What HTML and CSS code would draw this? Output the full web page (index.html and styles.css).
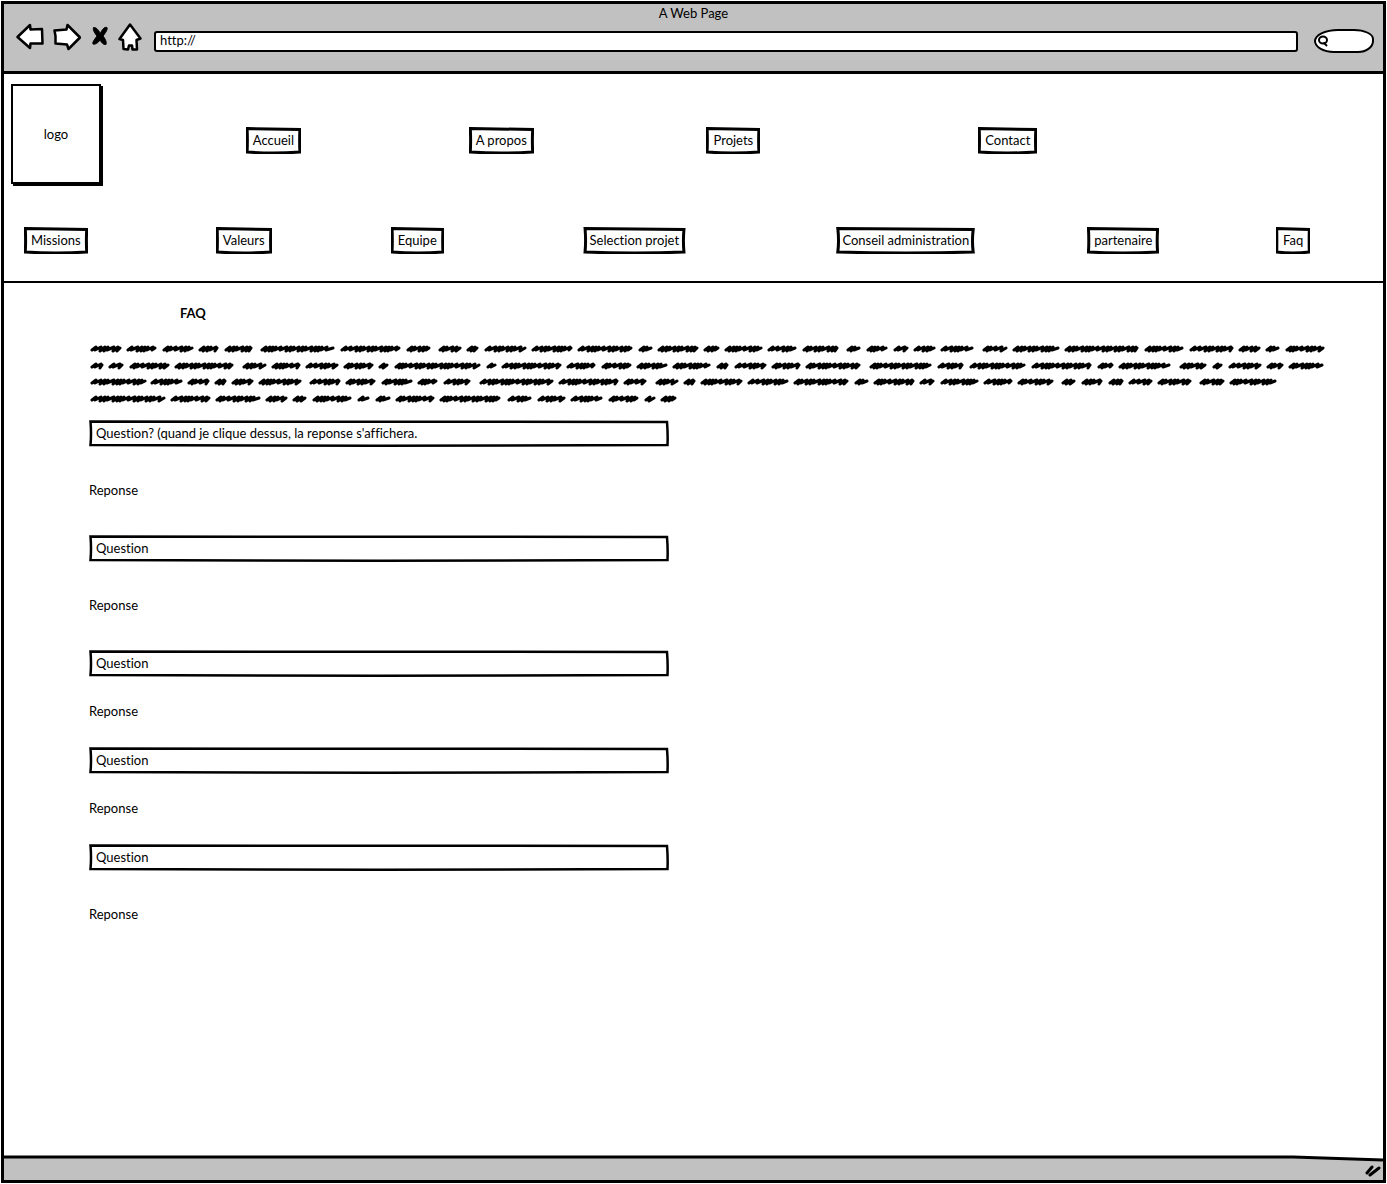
FILE: index.html
```
<!DOCTYPE html>
<html lang="fr">
<head>
<meta charset="utf-8">
<title>A Web Page</title>
<link rel="stylesheet" href="styles.css">
</head>
<body>
<div class="window">
  <header class="chrome">
    <div class="chrome-title">A Web Page</div>
    <div class="toolbar">
      <div class="tools">
        <button class="tool" type="button" aria-label="Back">
          <svg width="28" height="28" viewBox="0 0 28 28"><path d="M1.500 14 L14 2 L14.500 6.500 L26 6 L26.500 20.500 L14.500 20.500 L14 25 Z"/></svg>
        </button>
        <button class="tool tool-forward" type="button" aria-label="Forward">
          <svg width="28" height="28" viewBox="0 0 28 28"><path d="M1.500 7.500 L13.500 6.500 L14.500 2 L27 14.500 L15.500 26 L14 21.500 L2.500 20.500 L2.500 13 Z"/></svg>
        </button>
        <button class="tool tool-stop" type="button" aria-label="Stop">
          <svg width="18" height="28" viewBox="0 0 18 28"><path class="solid" d="M2.500 4.500 C5.500 4 8 8 9.500 10.500 C11 6.500 13.500 3.500 16 4.500 C17 6.500 14 10.500 12 13 C14 15.500 16 19 15 21.500 C12.500 22 10.500 19.500 9 17 C7.500 19.500 4 22 2 21 C1 19 4.500 15.500 6 13 C4 10.500 1.500 7 2.500 4.500 Z"/></svg>
        </button>
        <button class="tool" type="button" aria-label="Home">
          <svg width="24" height="28" viewBox="0 0 24 28"><path d="M12 1.500 L22.500 15.500 L18.500 17 L19 26.500 L14.500 26.500 L14 22.500 L11 22.500 L10 26.500 L5.500 26 L5 17 L1.500 16 Z"/></svg>
        </button>
      </div>
      <input class="address" type="text" aria-label="Address" value="http://">
      <label class="search">
        <svg width="12" height="14" viewBox="0 0 12 14"><ellipse cx="6" cy="6" rx="4" ry="3.500"/><path d="M6.500 8.500 L10 12"/></svg>
        <input class="search-input" type="search" aria-label="Search">
      </label>
    </div>
  </header>

  <div class="masthead">
    <div class="top-row">
      <a class="logo" href="#">logo</a>
      <a class="box" href="#">Accueil</a>
      <a class="box" href="#">A propos</a>
      <a class="box" href="#">Projets</a>
      <a class="box" href="#">Contact</a>
    </div>
    <nav class="sub-row">
      <a class="box" href="#">Missions</a>
      <a class="box" href="#">Valeurs</a>
      <a class="box" href="#">Equipe</a>
      <a class="box" href="#">Selection projet</a>
      <a class="box" href="#">Conseil administration</a>
      <a class="box" href="#">partenaire</a>
      <a class="box" href="#">Faq</a>
    </nav>
  </div>

  <main class="content">
    <h1 class="heading">FAQ</h1>
    <svg class="scribble" width="1240" height="66" viewBox="88 341 1240 66" aria-hidden="true"></svg>
    <section class="entry entry-tall">
      <button class="question" type="button">Question? (quand je clique dessus, la reponse s'affichera.</button>
      <p class="answer">Reponse</p>
    </section>
    <section class="entry entry-tall">
      <button class="question" type="button">Question</button>
      <p class="answer">Reponse</p>
    </section>
    <section class="entry">
      <button class="question" type="button">Question</button>
      <p class="answer">Reponse</p>
    </section>
    <section class="entry">
      <button class="question" type="button">Question</button>
      <p class="answer">Reponse</p>
    </section>
    <section class="entry entry-tall">
      <button class="question" type="button">Question</button>
      <p class="answer">Reponse</p>
    </section>
  </main>

  <footer class="status">
    <svg class="status-edge" viewBox="0 0 1380 8" preserveAspectRatio="none" aria-hidden="true"><path class="paper" d="M0 0 H1380 V5 L1290 2 H0 Z"/><path class="edge" d="M0 2 H1290 L1380 5"/></svg>
    <svg class="grip" width="18" height="14" viewBox="0 0 18 14" aria-hidden="true"><path d="M4 10 L9 4 M7 12 L16 5"/></svg>
  </footer>
</div>
<script src="scribble.js"></script>
</body>
</html>
```
FILE: styles.css
```
* { box-sizing: border-box; }
body {
  margin: 0;
  padding: 1px;
  background: #fff;
  color: #000;
  font-family: Lato, "Liberation Sans", sans-serif;
  font-size: 13px;
  line-height: 16px;
  font-variant-ligatures: none;
}
a { color: inherit; text-decoration: none; }
button, input { font: inherit; color: inherit; font-variant-ligatures: none; }
.window {
  display: flex;
  flex-direction: column;
  min-height: calc(100vh - 2px);
  border: 3px solid #000;
}
.chrome {
  height: 70px;
  background: #c1c1c1;
  border-bottom: 3px solid #000;
}
.chrome-title { padding-top: 1px; text-align: center; }
.toolbar {
  display: flex;
  align-items: center;
  gap: 12px;
  padding: 0 9px 0 12px;
}
.tools { display: flex; flex: none; gap: 9px; }
.tool {
  display: block;
  padding: 0;
  border: 0;
  background: none;
}
.tool svg { display: block; }
.tool path { fill: #fff; stroke: #000; stroke-width: 2.500px; stroke-linejoin: round; }
.tool .solid { fill: #000; stroke-width: 1px; }
.tool-forward { margin-right: 1px; }
.address {
  flex: 1;
  min-width: 0;
  height: 21px;
  margin-top: 8px;
  padding: 0 4px 2px;
  border: 2px solid #000;
  border-radius: 3px;
  background: #fff;
}
.search {
  display: flex;
  align-items: center;
  width: 60px;
  height: 24px;
  margin: 8px 0 0 4px;
  padding-left: 1px;
  border: 2px solid #000;
  border-radius: 24px 20px 16px 20px / 12px 10px 12px 12px;
  background: #fff;
}
.search svg { flex: none; fill: none; stroke: #000; stroke-width: 2px; }
.search-input { width: 100%; min-width: 0; border: 0; padding: 0; background: none; }

.masthead { padding: 10px 0 27px; border-bottom: 2px solid #000; }
.top-row {
  display: grid;
  grid-template-columns: 235fr 223fr 238fr 272fr 405fr;
  align-items: center;
  justify-items: start;
  padding-left: 7px;
}
.top-row .box { margin-top: 12px; }
.sub-row {
  display: grid;
  grid-template-columns: 192fr 175fr 192fr 253fr 252fr 189fr 107fr;
  justify-items: start;
  margin-top: 43px;
  padding-left: 20px;
}
.logo {
  display: flex;
  align-items: center;
  justify-content: center;
  width: 90px;
  height: 100px;
  border: 2px solid #000;
  box-shadow: 2px 2px 0 #000;
}
.box {
  padding: 5px 7px 6px;
  white-space: nowrap;
  background: url('data:image/svg+xml,<svg xmlns="http://www.w3.org/2000/svg" width="100" height="27" viewBox="0 0 100 27" preserveAspectRatio="none"><path d="M2 1.500 Q50 2 98 2.500 Q97 14 98 25 Q50 27 2 25 Q3 14 2 1.500Z" fill="white" stroke="black" stroke-width="3" vector-effect="non-scaling-stroke"/></svg>') 0 0 / 100% 100% no-repeat;
}

.content { flex: 1; padding: 20px 0 0 84px; }
.heading { margin: 0 0 18px 92px; font-size: 13px; line-height: 20px; }
.scribble { display: block; margin-bottom: 13px; fill: none; stroke: #000; stroke-width: 3px; stroke-linecap: round; stroke-linejoin: round; }
.entry { display: flex; flex-direction: column; gap: 26px; padding: 0 0 28px 1px; }
.entry-tall { gap: 35px; padding-bottom: 37px; }
.question {
  width: 580px;
  max-width: 100%;
  height: 27px;
  padding: 0 7px 2px;
  border: 0;
  text-align: left;
  background: url('data:image/svg+xml,<svg xmlns="http://www.w3.org/2000/svg" width="580" height="27" viewBox="0 0 580 27" preserveAspectRatio="none"><path d="M1.500 1.500 Q290 1 578 2 Q579 14 578.500 25 Q290 26.500 1.500 25 Q2.500 14 1.500 1.500Z" fill="white" stroke="black" stroke-width="2.500" vector-effect="non-scaling-stroke"/></svg>') 0 0 / 100% 100% no-repeat;
}
.answer { margin: 0; }

.status { display: flex; flex-direction: column; height: 25px; background: #c1c1c1; }
.status-edge { display: block; width: 100%; height: 8px; }
.paper { fill: #fff; }
.edge { fill: none; stroke: #000; stroke-width: 3px; }
.grip { align-self: flex-end; margin-right: 2px; fill: none; stroke: #000; stroke-width: 3px; stroke-linecap: round; }
```
FILE: scribble.js
```
// Each line of the placeholder paragraph: its middle, then the start and end of every word.
const lines = [
  [349, '90-122 126-157 162-194 198-219 224-253 260-335 340-401 406-431 438-462 466-479 484-527 531-573 577-633 638-653 657-699 703-720 724-763 767-797 802-839 846-861 866-888 893-909 913-936 940-974 982-1008 1012-1060 1064-1139 1144-1184 1189-1234 1238-1261 1265-1280 1285-1325'],
  [366, '90-104 108-124 129-170 174-234 242-267 271-301 305-339 343-374 378-389 394-481 486-497 501-562 566-596 601-632 636-668 672-711 716-729 734-767 771-801 805-861 869-932 937-964 969-1026 1031-1092 1097-1114 1118-1171 1179-1207 1212-1223 1228-1262 1266-1284 1288-1324'],
  [382, '90-147 150-183 187-210 214-227 231-254 258-302 309-341 345-376 381-413 417-438 443-471 479-554 558-619 623-647 655-679 683-696 700-743 747-789 793-849 854-869 873-915 919-935 940-979 983-1013 1017-1054 1061-1076 1081-1103 1108-1124 1128-1153 1157-1192 1199-1225 1229-1277'],
  [399, '90-166 170-211 215-261 265-288 292-307 312-352 357-370 375-391 395-435 439-501 507-532 537-566 570-603 608-639 644-656 660-677']
];
const pitches = [5, 4, 3, 6, 4, 3, 3, 5, 6, 4, 3];
let d = '';
for (const [y, words] of lines) {
  words.split(' ').forEach((word, w) => {
    const [from, to] = word.split('-').map(Number);
    let x = from + 2;
    let i = w * 3;
    d += `M${x} ${y + 1}`;
    while (x < to - 6) {
      const step = pitches[i++ % pitches.length];
      d += `L${x + 4} ${y - 2}L${x + 3} ${y + (step < 5 ? 2 : 1)}`;
      x += step;
    }
    d += `L${to - 2} ${y - 1}`;
  });
}
const path = document.createElementNS('http://www.w3.org/2000/svg', 'path');
path.setAttribute('d', d);
document.querySelector('.scribble').append(path);
```
